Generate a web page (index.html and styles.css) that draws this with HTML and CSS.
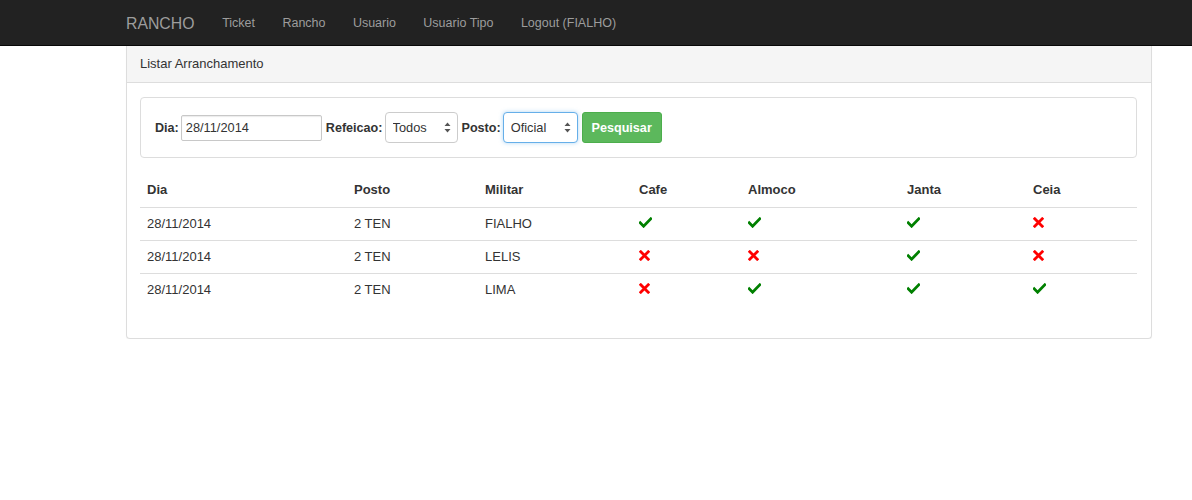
FILE: index.html
```html
<!DOCTYPE html>
<html lang="pt">
<head>
<meta charset="utf-8">
<title>Rancho</title>
<link rel="stylesheet" href="styles.css">
</head>
<body>
<nav class="navbar">
  <div class="nav-inner">
    <a class="brand" href="#">RANCHO</a>
    <ul class="nav-links">
      <li><a href="#">Ticket</a></li>
      <li><a href="#">Rancho</a></li>
      <li><a href="#">Usuario</a></li>
      <li><a href="#">Usuario Tipo</a></li>
      <li><a href="#">Logout (FIALHO)</a></li>
    </ul>
  </div>
</nav>
<main class="main">
  <section class="panel">
    <div class="panel-heading">Listar Arranchamento</div>
    <div class="panel-body">
      <form class="well">
        <label class="lbl" for="dia">Dia:</label>
        <input id="dia" class="input-date" type="text" value="28/11/2014">
        <label class="lbl" for="ref">Refeicao:</label>
        <span class="select-wrap sel-ref">
          <select id="ref" class="select"><option>Todos</option></select>
          <svg class="sel-arrow" width="7" height="11" viewBox="0 0 7 11"><path d="M3.5 0.5L6.5 4H0.5Z M3.5 10.5L6.5 7H0.5Z" fill="#555"/></svg>
        </span>
        <label class="lbl" for="posto">Posto:</label>
        <span class="select-wrap sel-posto">
          <select id="posto" class="select focus"><option>Oficial</option></select>
          <svg class="sel-arrow" width="7" height="11" viewBox="0 0 7 11"><path d="M3.5 0.5L6.5 4H0.5Z M3.5 10.5L6.5 7H0.5Z" fill="#555"/></svg>
        </span>
        <button class="btn-success" type="button">Pesquisar</button>
      </form>
      <table class="table">
        <colgroup>
          <col class="c1"><col class="c2"><col class="c3"><col class="c4"><col class="c5"><col class="c6"><col class="c7">
        </colgroup>
        <thead>
          <tr><th>Dia</th><th>Posto</th><th>Militar</th><th>Cafe</th><th>Almoco</th><th>Janta</th><th>Ceia</th></tr>
        </thead>
        <tbody>
          <tr>
            <td>28/11/2014</td><td>2 TEN</td><td>FIALHO</td>
            <td><svg class="ok" viewBox="0 0 13 11"><path d="M1.2 5.8L4.6 9.2L11.8 1.8"/></svg></td>
            <td><svg class="ok" viewBox="0 0 13 11"><path d="M1.2 5.8L4.6 9.2L11.8 1.8"/></svg></td>
            <td><svg class="ok" viewBox="0 0 13 11"><path d="M1.2 5.8L4.6 9.2L11.8 1.8"/></svg></td>
            <td><svg class="no" viewBox="0 0 11 11"><path d="M1.8 1.8L9.2 9.2M9.2 1.8L1.8 9.2"/></svg></td>
          </tr>
          <tr>
            <td>28/11/2014</td><td>2 TEN</td><td>LELIS</td>
            <td><svg class="no" viewBox="0 0 11 11"><path d="M1.8 1.8L9.2 9.2M9.2 1.8L1.8 9.2"/></svg></td>
            <td><svg class="no" viewBox="0 0 11 11"><path d="M1.8 1.8L9.2 9.2M9.2 1.8L1.8 9.2"/></svg></td>
            <td><svg class="ok" viewBox="0 0 13 11"><path d="M1.2 5.8L4.6 9.2L11.8 1.8"/></svg></td>
            <td><svg class="no" viewBox="0 0 11 11"><path d="M1.8 1.8L9.2 9.2M9.2 1.8L1.8 9.2"/></svg></td>
          </tr>
          <tr>
            <td>28/11/2014</td><td>2 TEN</td><td>LIMA</td>
            <td><svg class="no" viewBox="0 0 11 11"><path d="M1.8 1.8L9.2 9.2M9.2 1.8L1.8 9.2"/></svg></td>
            <td><svg class="ok" viewBox="0 0 13 11"><path d="M1.2 5.8L4.6 9.2L11.8 1.8"/></svg></td>
            <td><svg class="ok" viewBox="0 0 13 11"><path d="M1.2 5.8L4.6 9.2L11.8 1.8"/></svg></td>
            <td><svg class="ok" viewBox="0 0 13 11"><path d="M1.2 5.8L4.6 9.2L11.8 1.8"/></svg></td>
          </tr>
        </tbody>
      </table>
    </div>
  </section>
</main>
</body>
</html>
```
FILE: styles.css
```css
* { box-sizing: border-box; }
html, body { margin: 0; padding: 0; }
body {
  font-family: "Liberation Sans", Arial, Helvetica, sans-serif;
  font-size: 13px;
  color: #333;
  background: #fff;
}
a { text-decoration: none; }

.navbar {
  height: 46px;
  background: #222;
  border-bottom: 1px solid #080808;
}
.nav-inner {
  display: flex;
  align-items: center;
  height: 45px;
  padding-left: 126px;
  padding-top: 2px;
}
.brand {
  color: #9d9d9d;
  font-size: 15.8px;
  margin-right: 14px;
}
.nav-links {
  display: flex;
  list-style: none;
  margin: 0;
  padding: 0;
}
.nav-links a {
  display: block;
  padding: 0 13.7px;
  color: #9d9d9d;
  font-size: 12.5px;
  line-height: 43px;
}

.main {
  margin-left: 126px;
  width: 1026px;
}
.panel {
  border: 1px solid #ddd;
  border-top: none;
  border-radius: 0 0 4px 4px;
  box-shadow: 0 1px 1px rgba(0,0,0,0.05);
}
.panel-heading {
  height: 37px;
  background: #f5f5f5;
  border-bottom: 1px solid #ddd;
  padding: 0 13px 1px;
  display: flex;
  align-items: center;
  color: #333;
}
.panel-body {
  padding: 14px 14px 32px 13px;
}

.well {
  margin: 0;
  height: 61px;
  border: 1px solid #ddd;
  border-radius: 4px;
  background: #fff;
  display: flex;
  align-items: center;
  padding: 0 14px;
}
.lbl {
  font-weight: bold;
  font-size: 12.6px;
  margin-right: 2px;
}
.input-date {
  width: 141px;
  height: 26px;
  border: 1px solid #c8c8c8;
  border-radius: 2px;
  box-shadow: inset 0 1px 1px rgba(0,0,0,0.08);
  padding: 0 4px;
  font-family: inherit;
  font-size: 12.8px;
  color: #333;
  margin-right: 4px;
}
.select-wrap {
  position: relative;
  display: inline-block;
  margin-right: 4px;
}
.select {
  -webkit-appearance: none;
  appearance: none;
  height: 31px;
  border: 1px solid #ccc;
  border-radius: 4px;
  background: #fff;
  font-family: inherit;
  font-size: 12.8px;
  color: #333;
  padding: 0 7px;
  display: block;
}
.sel-ref .select { width: 73px; }
.sel-posto .select { width: 75px; }
.select.focus {
  border-color: #66afe9;
  box-shadow: 0 0 4px rgba(102,175,233,0.5);
}
.sel-arrow {
  position: absolute;
  right: 7px;
  top: 10px;
}
.btn-success {
  width: 80px;
  height: 31px;
  background: #5cb85c;
  border: 1px solid #4cae4c;
  border-radius: 3px;
  color: #fff;
  font-family: inherit;
  font-weight: bold;
  font-size: 12.6px;
  padding: 0;
}

.table {
  width: 997px;
  border-collapse: collapse;
  margin-top: 16px;
}
.c1 { width: 207px; }
.c2 { width: 131px; }
.c3 { width: 154px; }
.c4 { width: 109px; }
.c5 { width: 159px; }
.c6 { width: 126px; }
.c7 { width: 111px; }
.table th, .table td {
  text-align: left;
  padding: 8px 7px;
  line-height: 16px;
  height: 33px;
  vertical-align: middle;
}
.table th {
  font-weight: bold;
  border-bottom: 1px solid #ddd;
}
.table td {
  border-top: 1px solid #ddd;
}
.table tbody tr:first-child td { border-top: none; }
.ok, .no {
  display: block;
  fill: none;
  stroke-linecap: square;
}
.ok {
  width: 13px;
  height: 11px;
  stroke: #008000;
  stroke-width: 2.8;
  margin-top: -3px;
}
.no {
  width: 11px;
  height: 11px;
  stroke: #ff0000;
  stroke-width: 2.8;
  margin-top: -3px;
}
```
